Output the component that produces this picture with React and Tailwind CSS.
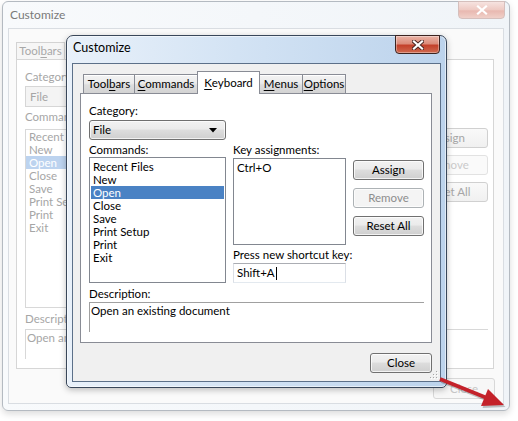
import React from "react";

const commands = ["Recent Files", "New", "Open", "Close", "Save", "Print Setup", "Print", "Exit"];
const bgCommands = ["Recent", "New", "Open", "Close", "Save", "Print Se", "Print", "Exit"];

function U({ children }) {
  return <span className="underline underline-offset-[2px] decoration-[1px]">{children}</span>;
}

// Win7 style push button
function Btn({ children, disabled, className = "" }) {
  return (
    <div
      className={`flex h-[20px] items-center justify-center rounded-[3px] border leading-none shadow-[inset_0_0_0_1px_rgba(255,255,255,0.75)] ${
        disabled
          ? "border-[#adb2b5] bg-[#f4f4f4] text-[#8d8d8d]"
          : "border-[#707070] bg-[linear-gradient(#f2f2f2,#ebebeb_45%,#dddddd_50%,#cfcfcf)] text-black"
      } ${className}`}
    >
      {children}
    </div>
  );
}

function Tab({ children, active, className = "" }) {
  if (active) {
    return (
      <div
        className={`relative z-10 -mb-px -ml-px flex h-[23px] items-start justify-center border border-b-0 border-[#898c95] bg-white pt-[3px] leading-[16px] ${className}`}
      >
        {children}
      </div>
    );
  }
  return (
    <div
      className={`-ml-px flex h-[19px] items-center justify-center border border-b-0 border-[#898c95] bg-[linear-gradient(#f3f3f3,#ebebeb_45%,#dddddd_55%,#d3d3d3)] leading-[16px] shadow-[inset_0_1px_0_#fff] first:ml-0 ${className}`}
    >
      {children}
    </div>
  );
}

function CloseX({ faded }) {
  return (
    <svg width="12" height="10" viewBox="0 0 12 10">
      {!faded && (
        <path d="M2 1.5 L10 8.5 M10 1.5 L2 8.5" stroke="#4a2520" strokeWidth="4" strokeLinecap="square" />
      )}
      <path d="M2 1.5 L10 8.5 M10 1.5 L2 8.5" stroke="#fff" strokeWidth="2.2" strokeLinecap="square" />
    </svg>
  );
}

function BackWindow() {
  return (
    <div className="absolute left-[2px] top-[1px] flex h-[410px] w-[508px] flex-col rounded-[6px] border border-[#b4bac1] bg-[linear-gradient(90deg,#f8fafc,#f0f4f8)] shadow-[0_3px_7px_rgba(0,0,0,0.14)]">
      <div className="flex h-[26px] items-center pl-[7px] text-[12px] text-[#7a7a7a]">Customize</div>
      <div className="absolute right-[4px] top-[-1px] flex h-[18px] w-[47px] items-center justify-center rounded-b-[4px] border border-[#d5bfbc] bg-[linear-gradient(#f6e3e0,#eec9c2_50%,#e8b8b0_55%,#f0d0c9)]">
        <CloseX faded />
      </div>
      <div className="mx-[5px] flex h-[376px] flex-col border border-[#d9dde2] bg-[#fafafa] pl-[7px] pr-[9px] pt-[13px] text-[11.5px]">
        <div className="flex">
          <div className="flex h-[17px] w-[49px] items-center justify-center border border-b-0 border-[#d3d3d3] bg-[#f6f6f6] leading-none text-[#a8a8a8]">
            Tool<U>b</U>ars
          </div>
        </div>
        <div className="flex h-[310px] flex-col border border-[#d6d6d6] bg-white pl-[8px] pr-[5px] pt-[10px] text-[#a6a6a6]">
          <div className="flex justify-between">
            <div className="flex w-[220px] flex-col">
              <div className="leading-[13px]">Category:</div>
              <div className="mt-[3px] flex h-[21px] items-center border border-[#d6d6d6] bg-[#f4f4f4] pl-[4px]">File</div>
              <div className="mt-[3px] leading-[13px]">Commands:</div>
              <div className="mt-[6px] h-[179px] border border-[#d8d8d8] bg-white">
                {bgCommands.map((c) => (
                  <div
                    key={c}
                    className={`h-[13px] pl-[3px] leading-[13px] ${c === "Open" ? "bg-[#bcd3ef] text-white" : ""}`}
                  >
                    {c}
                  </div>
                ))}
              </div>
            </div>
            <div className="flex w-[79px] flex-col gap-[7px] pt-[58px]">
              <div className="flex h-[20px] items-center justify-center rounded-[3px] border border-[#d0d0d0] bg-[linear-gradient(#f9f9f9,#f0f0f0)]">Assign</div>
              <div className="flex h-[20px] items-center justify-center rounded-[3px] border border-[#e2e2e2] bg-[#fafafa] text-[#cacaca]">Remove</div>
              <div className="flex h-[20px] items-center justify-center rounded-[3px] border border-[#d0d0d0] bg-[linear-gradient(#f9f9f9,#f0f0f0)]">Reset All</div>
            </div>
          </div>
          <div className="mt-[4px] leading-[13px]">Description:</div>
          <div className="mt-[4px] h-[30px] border-l border-t border-[#d8d8d8] pl-[1px] pt-[1px] leading-[13px]">
            Open an existing document
          </div>
        </div>
        <div className="mt-[9px] flex justify-end">
          <div className="-mr-px flex h-[21px] w-[62px] items-center justify-center rounded-[3px] border border-[#d8d8d8] bg-[#f7f7f7] text-[#c6c6c6]">
            Close
          </div>
        </div>
      </div>
    </div>
  );
}

function FrontWindow() {
  return (
    <div className="absolute left-[66px] top-[35px] flex h-[353px] w-[381px] flex-col rounded-t-[7px] rounded-b-[5px] border border-[#39475a] bg-[linear-gradient(90deg,#e9f1fa,#d3e3f4_45%,#bcd3ec)] shadow-[inset_0_0_0_1px_rgba(255,255,255,0.55),0_2px_6px_rgba(0,0,0,0.25)]">
      <div className="flex h-[27px] items-center pb-[2px] pl-[6px] text-[12.5px] text-black">Customize</div>
      <div className="absolute right-[6px] top-[-1px] flex h-[19px] w-[45px] items-center justify-center rounded-b-[4px] border border-[#3b2320] bg-[linear-gradient(#eab3a6,#dc8c7a_45%,#c4412b_55%,#cf6a4f)] shadow-[inset_0_0_0_1px_rgba(255,255,255,0.35)]">
        <CloseX />
      </div>
      <div className="relative mx-[5px] flex h-[319px] flex-col border border-[#5c7089] bg-[#f0f0f0] pl-[7px] pt-[7px] text-[11.5px] text-black">
        <div className="flex items-end pl-[3px]">
          <Tab className="w-[52px]">
            Tool<U>b</U>ars
          </Tab>
          <Tab className="w-[64px]">
            <U>C</U>ommands
          </Tab>
          <Tab active className="w-[63px]">
            <U>K</U>eyboard
          </Tab>
          <Tab className="w-[44px]">
            <U>M</U>enus
          </Tab>
          <Tab className="w-[44px]">
            <U>O</U>ptions
          </Tab>
        </div>
        <div className="flex h-[250px] w-[352px] flex-col border border-[#898c95] bg-white pl-[8px] pt-[10px]">
          <div className="grid grid-cols-[137px_113px_71px] gap-x-[7px]">
            <div className="flex flex-col">
              <div className="leading-[13px]">Category:</div>
              <div className="mt-[3px] flex h-[20px] items-center justify-between rounded-[3px] border border-[#707070] bg-[linear-gradient(#f2f2f2,#ebebeb_45%,#dddddd_50%,#cfcfcf)] pl-[3px] pr-[8px] shadow-[inset_0_0_0_1px_rgba(255,255,255,0.7)]">
                <span>File</span>
                <svg width="8" height="5" viewBox="0 0 8 5">
                  <path d="M0 0 H8 L4 4.5 Z" fill="#000" />
                </svg>
              </div>
              <div className="mt-[3px] leading-[13px]">Commands:</div>
              <div className="mt-[1px] h-[126px] border border-[#828790] bg-white pt-[2px]">
                {commands.map((c) => (
                  <div
                    key={c}
                    className={`mx-px h-[13px] pl-[2px] leading-[13px] ${c === "Open" ? "bg-[#4a82c4] text-white" : ""}`}
                  >
                    {c}
                  </div>
                ))}
              </div>
            </div>
            <div className="flex flex-col pt-[39px]">
              <div className="whitespace-nowrap leading-[13px]">Key assignments:</div>
              <div className="mt-[2px] h-[87px] border border-[#828790] bg-white pl-[3px] pt-[2px] leading-[13px]">
                Ctrl+O
              </div>
              <div className="mt-[3px] whitespace-nowrap leading-[13px]">Press new shortcut key:</div>
              <div className="mt-[2px] flex h-[20px] items-center border border-[#abadb3] border-b-[#e3e9ef] border-l-[#dbdfe6] border-r-[#dbdfe6] bg-white pl-[3px]">
                <span>Shift+A</span>
                <span className="ml-px h-[13px] w-px bg-black" />
              </div>
            </div>
            <div className="flex flex-col gap-[8px] pt-[56px]">
              <Btn>Assign</Btn>
              <Btn disabled>Remove</Btn>
              <Btn>Reset All</Btn>
            </div>
          </div>
          <div className="mt-[4px] leading-[13px]">Description:</div>
          <div className="mt-[2px] h-[30px] w-[335px] border-l border-t border-[#a0a0a0] pl-px pt-px leading-[13px]">
            Open an existing document
          </div>
        </div>
        <div className="mt-[10px] flex w-[352px] justify-end">
          <Btn className="w-[62px]">Close</Btn>
        </div>
        <svg className="absolute bottom-[1px] right-[1px]" width="10" height="10" viewBox="0 0 10 10">
          {[
            [8, 2],
            [5, 5],
            [8, 5],
            [2, 8],
            [5, 8],
            [8, 8],
          ].map(([x, y]) => (
            <g key={`${x}-${y}`}>
              <rect x={x} y={y} width="1" height="1" fill="#fff" />
              <rect x={x - 1} y={y - 1} width="1" height="1" fill="#a6a6a6" />
            </g>
          ))}
        </svg>
      </div>
    </div>
  );
}

export default function App() {
  return (
    <div className="relative h-[421px] w-[518px] overflow-hidden bg-white font-[Lato,Noto_Sans,sans-serif]">
      <BackWindow />
      <FrontWindow />
      {/* red pointer toward the resize corner */}
      <svg className="pointer-events-none absolute left-0 top-0" width="518" height="421" viewBox="0 0 518 421">
        <g transform="translate(1.5 2)" opacity="0.22">
          <path d="M440 379 L487 398" stroke="#000" strokeWidth="4" />
          <path d="M504 405 L488 389 L481 406 Z" fill="#000" />
        </g>
        <path d="M440 379 L487 398" stroke="#c4222a" strokeWidth="4" />
        <path d="M504 405 L488 389 L481 406 Z" fill="#c4222a" />
      </svg>
    </div>
  );
}
